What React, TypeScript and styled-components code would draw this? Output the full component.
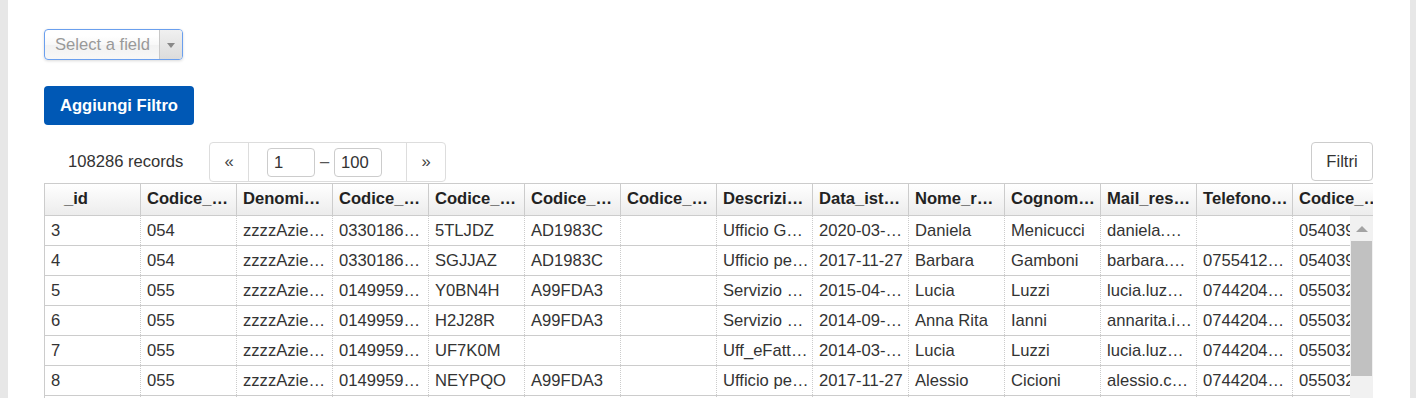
import * as React from "react";
import styled, { createGlobalStyle } from "styled-components";

const GlobalStyle = createGlobalStyle`
    html, body {
        margin: 0;
        padding: 0;
        height: 100%;
        overflow: hidden;
        background-color: #e7e7e7;
        font-family: "Liberation Sans", Arial, sans-serif;
        font-size: 16.6px;
        color: #333;
    }
`;

const columns = [
    "_id",
    "Codice_IPA",
    "Denominazione_ente",
    "Codice_fiscale_ente",
    "Codice_uni_uo",
    "Codice_uni_aoo",
    "Codice_uni_uo_padre",
    "Descrizione_uo",
    "Data_istituzione",
    "Nome_responsabile",
    "Cognome_responsabile",
    "Mail_responsabile",
    "Telefono_responsabile",
    "Codice_comune_ISTAT",
    "Codice_catastale_comune",
];

const rows: string[][] = [
    ["3", "054", "zzzzAziendaTest", "03301860544", "5TLJDZ", "AD1983C", "", "Ufficio Gestione", "2020-03-11 10:15", "Daniela", "Menicucci", "daniela.menicucci@test.it", "", "054039", "G478"],
    ["4", "054", "zzzzAziendaTest", "03301860544", "SGJJAZ", "AD1983C", "", "Ufficio per il protocollo", "2017-11-27", "Barbara", "Gamboni", "barbara.gamboni@test.it", "0755412345", "054039", "G478"],
    ["5", "055", "zzzzAziendaTest", "01499590550", "Y0BN4H", "A99FDA3", "", "Servizio Fatturazione", "2015-04-01 08:00", "Lucia", "Luzzi", "lucia.luz@test.it", "0744204123", "055032", "L117"],
    ["6", "055", "zzzzAziendaTest", "01499590550", "H2J28R", "A99FDA3", "", "Servizio Contabilità", "2014-09-15 08:00", "Anna Rita", "Ianni", "annarita.ianni@test.it", "0744204123", "055032", "L117"],
    ["7", "055", "zzzzAziendaTest", "01499590550", "UF7K0M", "", "", "Uff_eFatturaPA", "2014-03-31 08:00", "Lucia", "Luzzi", "lucia.luz@test.it", "0744204123", "055032", "L117"],
    ["8", "055", "zzzzAziendaTest", "01499590550", "NEYPQO", "A99FDA3", "", "Ufficio per il protocollo", "2017-11-27", "Alessio", "Cicioni", "alessio.c@test.it", "0744204123", "055032", "L117"],
    ["9", "055", "zzzzAziendaTest", "01499590550", "QW3E4R", "A99FDA3", "", "Ufficio tecnico", "2018-01-10", "Marco", "Rossi", "marco.rossi@test.it", "0744204123", "055032", "L117"],
];

const gridColumns = `97px repeat(${columns.length - 1}, 96px)`;

const Page = styled.div`
    margin: 0 6px 0 8px;
    height: 398px;
    background-color: #fff;
    padding: 29px 37px 0 36px;
    box-sizing: border-box;
    display: flex;
    flex-direction: column;
`;

const SelectBox = styled.div`
    width: 139px;
    height: 31px;
    box-sizing: border-box;
    display: flex;
    border: 1px solid #6a9fee;
    border-radius: 4px;
    box-shadow: 0 1px 3px rgba(0, 0, 0, 0.15);
    background: linear-gradient(#fff 20%, #f8f8f8 50%, #f2f2f2 52%, #f7f7f7 100%);
    overflow: hidden;
`;

const SelectLabel = styled.div`
    flex: 1;
    padding-left: 10px;
    line-height: 29px;
    color: #999;
    white-space: nowrap;
`;

const SelectArrow = styled.div`
    width: 22px;
    flex: none;
    border-left: 1px solid #c8c8c8;
    background: linear-gradient(#f0f0f0, #dcdcdc);
    display: flex;
    align-items: center;
    justify-content: center;

    &::after {
        content: "";
        border-left: 4px solid transparent;
        border-right: 4px solid transparent;
        border-top: 5px solid #888;
        margin-top: 2px;
    }
`;

const PrimaryButton = styled.button`
    align-self: flex-start;
    margin-top: 26px;
    width: 150px;
    height: 39px;
    border: none;
    border-radius: 4px;
    background-color: #0058b5;
    color: #fff;
    font-family: "Liberation Sans", Arial, sans-serif;
    font-size: 16.6px;
    font-weight: bold;
    padding: 0;
`;

const Toolbar = styled.div`
    margin-top: 17px;
    height: 41px;
    display: flex;
    align-items: flex-start;
`;

const RecordCount = styled.div`
    width: 165px;
    padding-left: 24px;
    box-sizing: border-box;
    line-height: 40px;
    white-space: nowrap;
`;

const Pager = styled.div`
    display: flex;
    height: 40px;
    box-sizing: border-box;
    border: 1px solid #ddd;
    border-radius: 4px;
`;

const PagerArrow = styled.div<{ $side: "left" | "right" }>`
    width: 38px;
    display: flex;
    align-items: center;
    justify-content: center;
    color: #444;
    ${(p) => (p.$side === "left" ? "border-right: 1px solid #ddd;" : "border-left: 1px solid #ddd;")}
`;

const PagerRange = styled.div`
    width: 157px;
    display: flex;
    align-items: center;
    padding-left: 18px;
    box-sizing: border-box;
`;

const PagerInput = styled.div`
    width: 48px;
    height: 29px;
    box-sizing: border-box;
    border: 1px solid #ccc;
    border-radius: 4px;
    padding-left: 6px;
    line-height: 27px;
`;

const Dash = styled.span`
    width: 19px;
    text-align: center;
    color: #555;
`;

const Spacer = styled.div`
    flex: 1;
`;

const OutlineButton = styled.button`
    width: 62px;
    height: 39px;
    border: 1px solid #ccc;
    border-radius: 4px;
    background-color: #fff;
    color: #333;
    font-family: "Liberation Sans", Arial, sans-serif;
    font-size: 16.6px;
    padding: 0;
`;

const Table = styled.div`
    flex: 1;
    display: flex;
    flex-direction: column;
    overflow: hidden;
    border-top: 1px solid #ccc;
`;

const HeaderRow = styled.div`
    display: grid;
    grid-template-columns: ${gridColumns};
    height: 31px;
    flex: none;
    border-bottom: 1px solid #ccc;
    background: linear-gradient(#fff, #ececec);
`;

const HeaderCell = styled.div<{ $first?: boolean }>`
    border-right: 1px solid #ccc;
    ${(p) => (p.$first ? "border-left: 1px solid #ccc; padding-left: 19px;" : "padding-left: 6px;")}
    padding-right: 4px;
    font-weight: bold;
    color: #222;
    line-height: 30px;
    white-space: nowrap;
    overflow: hidden;
    text-overflow: ellipsis;
`;

const Body = styled.div`
    flex: 1;
    display: flex;
    overflow: hidden;
`;

const BodyRows = styled.div`
    flex: 1;
    overflow: hidden;
`;

const Row = styled.div`
    display: grid;
    grid-template-columns: ${gridColumns};
    height: 30px;
    box-sizing: border-box;
    border-bottom: 1px solid #ccc;
`;

const Cell = styled.div<{ $first?: boolean }>`
    border-right: 1px dotted #ccc;
    ${(p) => (p.$first ? "border-left: 1px solid #ccc;" : "")}
    padding: 0 3px 0 6px;
    line-height: 29px;
    color: #333;
    white-space: nowrap;
    overflow: hidden;
    text-overflow: ellipsis;
`;

const ScrollTrack = styled.div`
    width: 23px;
    flex: none;
    background-color: #f1f1f1;
    display: flex;
    flex-direction: column;
    align-items: center;
`;

const ScrollUp = styled.div`
    height: 25px;
    width: 100%;
    display: flex;
    align-items: center;
    justify-content: center;

    &::after {
        content: "";
        border-left: 6px solid transparent;
        border-right: 6px solid transparent;
        border-bottom: 6px solid #a3a3a3;
    }
`;

const ScrollThumb = styled.div`
    width: 21px;
    height: 135px;
    background-color: #c1c1c1;
`;

const App = () => {
    return (
        <>
            <GlobalStyle />
            <Page>
                <SelectBox>
                    <SelectLabel>Select a field</SelectLabel>
                    <SelectArrow />
                </SelectBox>
                <PrimaryButton>Aggiungi Filtro</PrimaryButton>
                <Toolbar>
                    <RecordCount>108286 records</RecordCount>
                    <Pager>
                        <PagerArrow $side="left">«</PagerArrow>
                        <PagerRange>
                            <PagerInput>1</PagerInput>
                            <Dash>–</Dash>
                            <PagerInput>100</PagerInput>
                        </PagerRange>
                        <PagerArrow $side="right">»</PagerArrow>
                    </Pager>
                    <Spacer />
                    <OutlineButton>Filtri</OutlineButton>
                </Toolbar>
                <Table>
                    <HeaderRow>
                        {columns.map((c, i) => (
                            <HeaderCell key={c} $first={i === 0}>{c}</HeaderCell>
                        ))}
                    </HeaderRow>
                    <Body>
                        <BodyRows>
                            {rows.map((r) => (
                                <Row key={r[0]}>
                                    {r.map((v, i) => (
                                        <Cell key={i} $first={i === 0}>{v}</Cell>
                                    ))}
                                </Row>
                            ))}
                        </BodyRows>
                        <ScrollTrack>
                            <ScrollUp />
                            <ScrollThumb />
                        </ScrollTrack>
                    </Body>
                </Table>
            </Page>
        </>
    );
};

export default App;
